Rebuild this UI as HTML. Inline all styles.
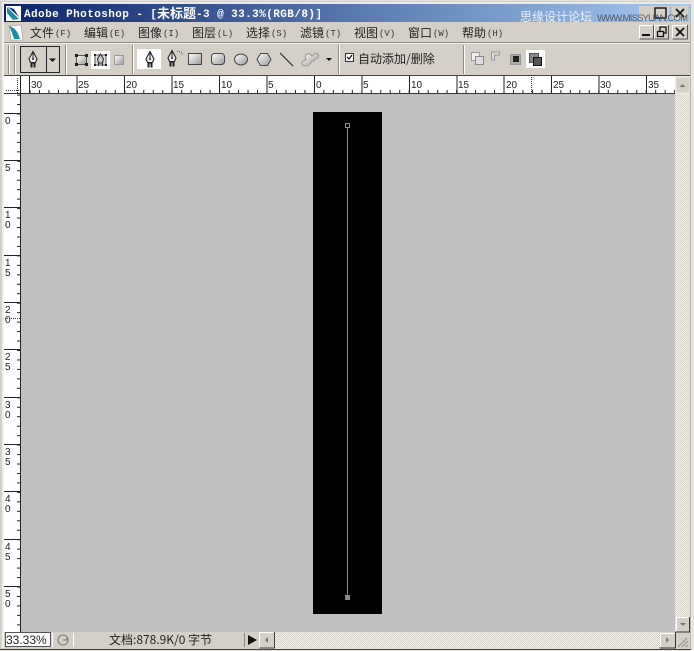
<!DOCTYPE html>
<html><head><meta charset="utf-8">
<style>
html,body{margin:0;padding:0;background:#d4d0c8}
svg{display:block}
text{font-family:"Liberation Sans","Noto Sans CJK SC",sans-serif;fill:#000}
.cn{font-family:"WenQuanYi Zen Hei","Noto Sans CJK SC",sans-serif;font-size:12px;fill:#222}
.sm{font-family:"Liberation Mono",monospace;font-size:9px;fill:#333}
.t{font-family:"Liberation Mono",monospace;font-size:11px;font-weight:bold;fill:#fff}
.tc{font-family:"Noto Sans CJK SC",sans-serif;font-size:13px;font-weight:bold;fill:#fff}
.r{font-family:"Liberation Sans",sans-serif;font-size:10px;fill:#222}
</style></head><body>
<svg width="694" height="651" viewBox="0 0 694 651" xmlns="http://www.w3.org/2000/svg">
<defs>
<linearGradient id="tb" x1="0" x2="1" y1="0" y2="0"><stop offset="0" stop-color="#0a246a"/><stop offset="1" stop-color="#a6caf0"/></linearGradient>
<linearGradient id="g" x1="0" x2="1" y1="0" y2="1"><stop offset="0" stop-color="#fff"/><stop offset="1" stop-color="#999"/></linearGradient>
<pattern id="d" width="2" height="2" patternUnits="userSpaceOnUse"><rect width="2" height="2" fill="#f4f3f0"/><rect width="1" height="1" fill="#d4d0c8"/><rect x="1" y="1" width="1" height="1" fill="#d4d0c8"/></pattern>
<pattern id="hx" x="29.5" y="0" width="9.48" height="4" patternUnits="userSpaceOnUse"><rect width="1" height="4" fill="#222"/></pattern>
<pattern id="vy" x="0" y="113.5" width="4" height="9.46" patternUnits="userSpaceOnUse"><rect width="4" height="1" fill="#222"/></pattern>
<g id="pen"><path d="M5 .5 L9 8 L7.500 11.500 H2.500 L1 8 Z" fill="#eee" stroke="#222" stroke-width="1.100"/><path d="M5 1V7" stroke="#222"/><circle cx="5" cy="8" r="1" fill="#222"/><path d="M2.500 12h5" stroke="#222" stroke-width="1.200"/><rect x="2.500" y="12.500" width="2" height="4" fill="#222"/><rect x="5.500" y="12.500" width="2" height="4" fill="#222"/></g>
</defs>

<rect width="694" height="651" fill="#d4d0c8"/>
<rect x="0" y="0" width="694" height="1" fill="#e4e2dc"/>
<rect x="2" y="2" width="690" height="2" fill="#ece9e2"/>
<rect x="2" y="2" width="2" height="646" fill="#f0eee8"/>

<!-- title bar -->
<rect x="4" y="4" width="687" height="18" fill="url(#tb)"/>
<rect x="6" y="6" width="15" height="15" fill="#fff"/>
<path d="M7 7 L19 19 L13 20 L7 13Z" fill="#1a8fa0"/><path d="M8 7 L19 17 L14 9Z" fill="#10306a"/>
<text class="t" x="24" y="17" textLength="133" lengthAdjust="spacing">Adobe Photoshop - [</text>
<text class="tc" x="157" y="18" textLength="39" lengthAdjust="spacing">未标题</text>
<text class="t" x="196" y="17" textLength="126" lengthAdjust="spacing">-3 @ 33.3%(RGB/8)]</text>
<text x="520" y="21" style="font-family:'Noto Sans CJK SC',sans-serif;font-size:12px;fill:#eaf2fb">思缘设计论坛</text>
<rect x="639" y="6" width="15" height="14" fill="#d4d0c8"/><rect x="654" y="6" width="15" height="14" fill="#d4d0c8"/><rect x="672" y="6" width="16" height="14" fill="#d4d0c8"/>
<rect x="655" y="8" width="11" height="10" fill="none" stroke="#111" stroke-width="1.400"/>
<path d="M676 9l8 8M684 9l-8 8" stroke="#111" stroke-width="1.700"/>
<text x="597" y="21" style="font-family:'Liberation Sans',sans-serif;font-size:9.500px;fill:#4c5a70" textLength="91">WWW.MISSYUAN.COM</text>

<!-- menu -->
<path d="M9 26 L21 25 L23 40 L11 40Z" fill="#fff" stroke="#999" stroke-width=".6"/><path d="M9 26 Q17 28 20 39 L14 39 Q12 32 9 26Z" fill="#1a8fa0"/>
<text class="cn" x="30" y="37">文件</text><text class="sm" x="55" y="36">(F)</text>
<text class="cn" x="84" y="37">编辑</text><text class="sm" x="109" y="36">(E)</text>
<text class="cn" x="138" y="37">图像</text><text class="sm" x="163" y="36">(I)</text>
<text class="cn" x="192" y="37">图层</text><text class="sm" x="217" y="36">(L)</text>
<text class="cn" x="246" y="37">选择</text><text class="sm" x="271" y="36">(S)</text>
<text class="cn" x="300" y="37">滤镜</text><text class="sm" x="325" y="36">(T)</text>
<text class="cn" x="354" y="37">视图</text><text class="sm" x="379" y="36">(V)</text>
<text class="cn" x="408" y="37">窗口</text><text class="sm" x="433" y="36">(W)</text>
<text class="cn" x="462" y="37">帮助</text><text class="sm" x="487" y="36">(H)</text>
<g fill="none">
<path d="M639.500 38.500v-13h14M654.500 38.500v-13h14M672.500 38.500v-13h15" stroke="#fff"/>
<path d="M653.500 25v14h-14M668.500 25v14h-14M687.500 25v14h-15" stroke="#555"/>
<rect x="642" y="34" width="8" height="2" fill="#111"/>
<path d="M660 31v-4h6v6h-2M657.500 31.500h6v5h-6z" stroke="#111" stroke-width="1.300"/>
<path d="M676 28l8 8M684 28l-8 8" stroke="#111" stroke-width="1.700"/>
</g>
<rect x="4" y="42" width="686" height="1" fill="#8e8b84"/><rect x="4" y="43" width="686" height="1" fill="#f2f0ea"/>

<!-- option bar -->
<path d="M8.500 45v29M14.500 45v29" stroke="#8e8b84" stroke-width="1"/><path d="M9.500 45v29M15.500 45v29" stroke="#fff"/>
<rect x="20.500" y="46.500" width="39" height="26" fill="#d4d0c8" stroke="#222" stroke-width="1"/>
<path d="M46.500 47v25" stroke="#222"/>
<use href="#pen" x="28" y="51"/>
<path d="M49 58.500h7l-3.500 3.500z" fill="#111"/>
<path d="M65.500 45v29" stroke="#8e8b84"/><path d="M66.500 45v29" stroke="#fff"/>
<rect x="76.500" y="55.500" width="10" height="9" fill="url(#g)" stroke="#555"/>
<path d="M75 54h3v3h-3zM85 54h3v3h-3zM75 63h3v3h-3zM85 63h3v3h-3z" fill="#222"/>
<rect x="91" y="51" width="19" height="18" fill="#fff"/>
<rect x="95" y="55" width="11" height="10" fill="#ddd" stroke="#555"/>
<path d="M94 54h2v2h-2zM105 54h2v2h-2zM94 64h2v2h-2zM105 64h2v2h-2z" fill="#222"/>
<use href="#pen" x="96" y="52" transform="translate(5 11) scale(.8) translate(-1 -1)" opacity="0"/>
<path d="M100.500 54l3 5-1 4h-4l-1-4z" fill="#ccc" stroke="#222"/><path d="M98.500 63v3M102.500 63v3" stroke="#222"/>
<rect x="114.500" y="55.500" width="9" height="9" fill="url(#g)" stroke="#999"/>
<path d="M132.500 45v29" stroke="#8e8b84"/><path d="M133.500 45v29" stroke="#fff"/>
<rect x="137" y="49" width="24" height="20" fill="#fff"/>
<use href="#pen" x="145" y="51"/>
<use href="#pen" x="167" y="50"/>
<path d="M177 51l4 1 2 3" fill="none" stroke="#555" stroke-dasharray="1 1"/>
<rect x="188.500" y="53.500" width="13" height="11" fill="url(#g)" stroke="#444"/>
<rect x="211.500" y="53.500" width="13" height="11" rx="3" fill="url(#g)" stroke="#444"/>
<ellipse cx="241" cy="59.500" rx="6.500" ry="5.500" fill="url(#g)" stroke="#444"/>
<path d="M260.500 53.500h7l3.500 6-3.500 6h-7l-3.500-6z" fill="url(#g)" stroke="#444"/>
<path d="M280 53l13 13" stroke="#222" stroke-width="1.100"/>
<path d="M307 54 Q310 53 312 56 Q316 52 318 54 Q320 58 315 59 Q314 62 312 61 Q310 66 306 66 Q301 66 302 62 Q305 60 306 59 Q304 56 307 54Z" fill="url(#g)" stroke="#999"/>
<path d="M326 58h6l-3 3z" fill="#111"/>
<path d="M338.500 45v29" stroke="#8e8b84"/><path d="M339.500 45v29" stroke="#fff"/>
<rect x="345.500" y="53.500" width="8" height="8" fill="#fff" stroke="#333"/>
<path d="M347 57l2 2 3-4" fill="none" stroke="#111" stroke-width="1.200"/>
<text x="358" y="63" style="font-family:'WenQuanYi Zen Hei','Noto Sans CJK SC',sans-serif;font-size:12px;fill:#222">自动添加/删除</text>
<path d="M463.500 45v29" stroke="#8e8b84"/><path d="M464.500 45v29" stroke="#fff"/>
<rect x="471.500" y="52.500" width="8" height="8" fill="#eee" stroke="#999"/><rect x="475.500" y="56.500" width="8" height="8" fill="#ddd" stroke="#888"/>
<path d="M491.500 60v-8h8v3h-5v5z" fill="#ddd" stroke="#999"/>
<rect x="510.500" y="54.500" width="10" height="10" fill="#aaa" stroke="#999"/><rect x="513" y="56" width="6" height="6" fill="#222"/>
<rect x="526" y="50" width="19" height="18" fill="#fff"/>
<rect x="529.500" y="53.500" width="9" height="9" fill="#888" stroke="#555"/><rect x="533.500" y="57.500" width="8" height="8" fill="#555" stroke="#111"/>

<!-- rulers -->
<rect x="4" y="75" width="686" height="1" fill="#444"/>
<rect x="4" y="76" width="671" height="17" fill="#fff"/>
<rect x="4" y="76" width="16" height="18" fill="#fff"/>
<rect x="4" y="93" width="671" height="1" fill="#333"/>
<rect x="29" y="90" width="646" height="3" fill="url(#hx)"/>
<path d="M6 90.500h14M17.500 78v15" stroke="#333" stroke-dasharray="1 1"/>
<path d="M20.500 76v556" stroke="#222"/>
<path d="M29.500 76v17M77 76v17M124.500 76v17M172 76v17M219.500 76v17M267 76v17M314.500 76v17M362 76v17M409.500 76v17M457 76v17M504 76v17M551.500 76v17M599 76v17M646.500 76v17" stroke="#222"/>
<path d="M531.500 77v16" stroke="#222" stroke-dasharray="1 1"/>
<g>
<text class="r" x="31" y="88">30</text><text class="r" x="78" y="88">25</text><text class="r" x="126" y="88">20</text><text class="r" x="173" y="88">15</text><text class="r" x="221" y="88">10</text><text class="r" x="268" y="88">5</text><text class="r" x="316" y="88">0</text><text class="r" x="363" y="88">5</text><text class="r" x="411" y="88">10</text><text class="r" x="458" y="88">15</text><text class="r" x="506" y="88">20</text><text class="r" x="553" y="88">25</text><text class="r" x="600" y="88">30</text><text class="r" x="648" y="88">35</text>
</g>
<rect x="4" y="94" width="16" height="538" fill="#fff"/>
<rect x="17" y="94" width="3" height="538" fill="url(#vy)"/>
<path d="M4 113.500h16M4 160.500h16M4 207.500h16M4 255.500h16M4 302.500h16M4 349.500h16M4 397.500h16M4 444.500h16M4 491.500h16M4 539.500h16M4 586.500h16" stroke="#222"/>
<path d="M5 318.500h15" stroke="#333" stroke-dasharray="1 1"/>
<g>
<text class="r" x="5" y="124">0</text>
<text class="r" x="5" y="171">5</text>
<text class="r" x="5" y="218">1</text><text class="r" x="5" y="228">0</text>
<text class="r" x="5" y="266">1</text><text class="r" x="5" y="276">5</text>
<text class="r" x="5" y="313">2</text><text class="r" x="5" y="323">0</text>
<text class="r" x="5" y="360">2</text><text class="r" x="5" y="370">5</text>
<text class="r" x="5" y="408">3</text><text class="r" x="5" y="418">0</text>
<text class="r" x="5" y="455">3</text><text class="r" x="5" y="465">5</text>
<text class="r" x="5" y="502">4</text><text class="r" x="5" y="512">0</text>
<text class="r" x="5" y="550">4</text><text class="r" x="5" y="560">5</text>
<text class="r" x="5" y="597">5</text><text class="r" x="5" y="607">0</text>
</g>

<!-- canvas -->
<rect x="21" y="94" width="654" height="538" fill="#c0c0c0"/>
<rect x="313" y="112" width="69" height="502" fill="#000"/>
<path d="M347.500 127v468" stroke="#8a8a8a"/>
<rect x="345.500" y="123.500" width="4" height="4" fill="#000" stroke="#8a8a8a"/>
<rect x="345" y="595" width="5" height="5" fill="#8a8a8a"/>

<!-- right scrollbar -->
<rect x="675" y="76" width="15" height="556" fill="url(#d)"/>
<rect x="676" y="77" width="14" height="16" fill="#d4d0c8" stroke="#fff" stroke-width=".6"/>
<path d="M679.500 87h6l-3-3z" fill="#777"/>
<rect x="676" y="617" width="14" height="15" fill="#d4d0c8"/>
<path d="M676.500 631v-13.500h12" fill="none" stroke="#fff"/><path d="M689.500 617v15h-14" fill="none" stroke="#333"/>
<path d="M680 623h6l-3 3z" fill="#777"/>

<!-- status -->
<rect x="4" y="632" width="671" height="17" fill="#d4d0c8"/>
<rect x="5.500" y="632.500" width="45" height="14" fill="#fff" stroke="#555"/>
<text x="6" y="644" style="font-family:'Liberation Sans',sans-serif;font-size:12px;fill:#222">33.33%</text>
<path d="M52.500 633v14M73.500 633v14" stroke="#fff"/>
<circle cx="63" cy="640" r="5" fill="#d4d0c8" stroke="#888" stroke-width="1.200"/><path d="M63 640h4v-3" fill="none" stroke="#777"/>
<text x="109" y="644" style="font-family:'WenQuanYi Zen Hei','Noto Sans CJK SC',sans-serif;font-size:12px;fill:#222">文档:878.9K/0 字节</text>
<path d="M244.500 633v14" stroke="#8e8b84"/>
<path d="M248 635l9 5-9 5z" fill="#111"/>
<rect x="259" y="632" width="15" height="16" fill="#d4d0c8"/>
<path d="M259.500 647v-14.500h14" fill="none" stroke="#fff"/><path d="M274.500 632v16h-15" fill="none" stroke="#444"/>
<path d="M268 637v6l-3-3z" fill="#777"/>
<rect x="275" y="632" width="385" height="17" fill="url(#d)"/>
<rect x="660" y="633" width="15" height="15" fill="#d4d0c8"/>
<path d="M660.500 647v-13.500h14" fill="none" stroke="#fff"/><path d="M675.500 632v16h-16" fill="none" stroke="#333"/>
<path d="M666 637v6l3-3z" fill="#777"/>
<path d="M678 647l9-9M682 647l6-6M686 647l2-2" stroke="#8e8b84"/>
<rect x="0" y="649" width="694" height="1" fill="#444"/>
<rect x="0" y="650" width="694" height="1" fill="#e4e2dc"/>
<rect x="690" y="4" width="1" height="645" fill="#b8b5ae"/>
<rect x="691" y="0" width="3" height="651" fill="#e8e6e0"/>
</svg>
</body></html>
